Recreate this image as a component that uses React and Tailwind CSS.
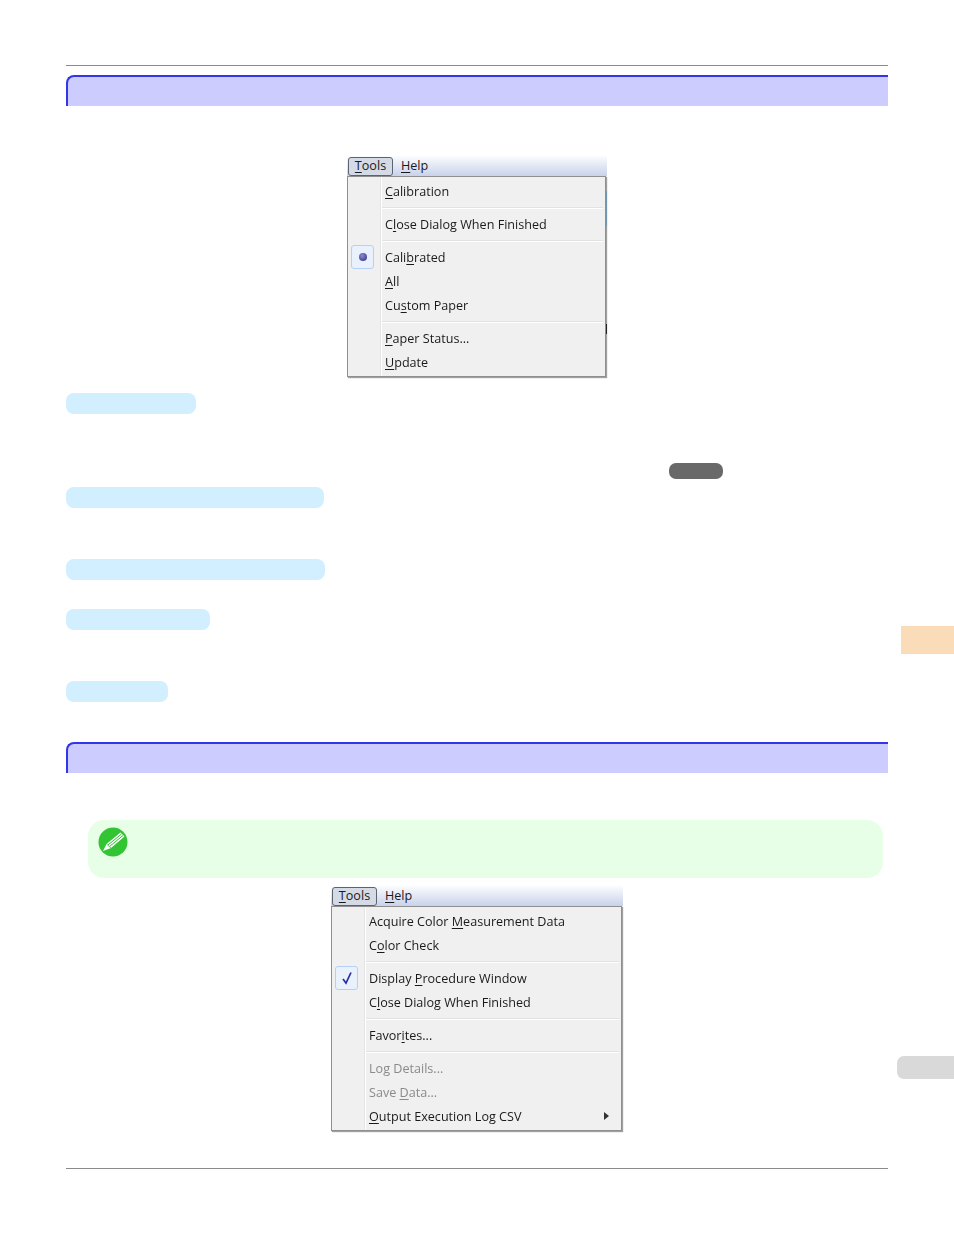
const Sep = () => (
  <div className="h-[9px] flex items-center pl-[33px] pr-[2px]">
    <div className="h-[2px] w-full bg-[#e2e2e2] border-b border-white"></div>
  </div>
);

const Item = ({ children, gray, mark, arrow }) => (
  <div className={"h-[24px] flex items-center pl-[37px] pt-[2px] relative " + (gray ? "text-[#8a8a8a]" : "text-[#1a1a1a]")}>
    {mark && (
      <div className="absolute left-[3px] top-0 w-[23px] h-[24px] rounded-[3px] border border-[#b5d0f2] bg-[#e9f1fc] flex items-center justify-center">
        {mark === "dot" ? (
          <div className="w-[8px] h-[8px] rounded-full bg-[radial-gradient(circle_at_40%_35%,#8c8cd0,#2c2c80)]"></div>
        ) : (
          <svg width="12" height="14" viewBox="0 0 12 14">
            <path d="M2 8 L5 12 L10 1.5" fill="none" stroke="#2a2fa0" strokeWidth="1.7" />
          </svg>
        )}
      </div>
    )}
    <span>{children}</span>
    {arrow && <div className="absolute right-[12px] top-[8px] w-0 h-0 border-y-[4px] border-y-transparent border-l-[5px] border-l-[#333]"></div>}
  </div>
);

const K = ({ children }) => <u className="underline underline-offset-2 decoration-1">{children}</u>;

const MenuBar = () => (
  <div className="h-[20px] flex items-center bg-gradient-to-b from-[#fbfcfe] to-[#c9d2ea] text-[#1a1a1a]">
    <div className="ml-[1px] w-[45px] h-[19px] rounded-[3px] border border-[#5c6470] bg-[#d5dbe6] flex items-center justify-center"><span><K>T</K>ools</span></div>
    <div className="ml-[8px]"><K>H</K>elp</div>
  </div>
);

const Panel = ({ children }) => (
  <div className="mr-[1px] border border-[#8f8f8f] bg-[#f0f0f0] py-[2px] relative shadow-[1px_1px_1px_#a0a0a0]">
    <div className="absolute left-[32px] top-0 bottom-0 w-[2px] bg-[#e6e6e6] border-r border-white"></div>
    {children}
  </div>
);

const Section = () => (
  <div className="h-[31px] rounded-tl-[8px] border-t-2 border-l-2 border-[#3434e8] bg-[#ccccff]"></div>
);

const Pill = ({ className }) => <div className={"h-[21px] rounded-[8px] bg-[#d1efff] " + className}></div>;

const PencilBadge = () => (
  <svg width="30" height="30" viewBox="0 0 30 30" className="ml-[10px] mt-[7px]">
    <circle cx="15" cy="15" r="14.5" fill="#33c433" />
    <path d="M5 24 L8.5 17 L22.5 5.5 L26.5 9.5 L13 21 Z" fill="#fff" />
    <path d="M10 18 L23.5 7 M11.5 19.5 L25 8.5" stroke="#33c433" strokeWidth="1" fill="none" />
    <path d="M8.5 17 L13 21" stroke="#33c433" strokeWidth="0.8" fill="none" />
  </svg>
);

export default function App() {
  return (
    <div className="relative w-[954px] h-[1235px] bg-white overflow-hidden pt-[65px] px-[66px] font-['Open_Sans','Noto_Sans',sans-serif] text-[12.6px] leading-none">
      <div className="h-px w-[822px] bg-[#8a8a8a]"></div>
      <div className="w-[822px] mt-[9px]"><Section /></div>

      <div className="relative w-[260px] ml-[281px] mt-[50px] h-[222px] blur-[0.3px]">
        <MenuBar />
        <Panel>
          <Item><K>C</K>alibration</Item>
          <Sep />
          <Item>C<K>l</K>ose Dialog When Finished</Item>
          <Sep />
          <Item mark="dot">Cali<K>b</K>rated</Item>
          <Item><K>A</K>ll</Item>
          <Item>Cu<K>s</K>tom Paper</Item>
          <Sep />
          <Item><K>P</K>aper Status...</Item>
          <Item><K>U</K>pdate</Item>
        </Panel>
        <div className="absolute left-[259px] top-[35px] w-px h-[35px] bg-[#6f97ad]"></div>
        <div className="absolute left-[259px] top-[168px] w-px h-[10px] bg-[#222]"></div>
      </div>

      <Pill className="w-[130px] mt-[15px]" />
      <div className="ml-[603px] mt-[49px] w-[54px] h-[16px] rounded-[7px] bg-[#696969]"></div>
      <Pill className="w-[258px] mt-[8px]" />
      <Pill className="w-[259px] mt-[51px]" />
      <Pill className="w-[144px] mt-[29px]" />
      <Pill className="w-[102px] mt-[51px]" />

      <div className="w-[822px] mt-[40px]"><Section /></div>

      <div className="ml-[22px] mt-[47px] w-[795px] h-[58px] rounded-[16px] bg-[#e6ffe6] overflow-hidden">
        <PencilBadge />
      </div>

      <div className="w-[292px] ml-[265px] mt-[8px] h-[247px] blur-[0.3px]">
        <MenuBar />
        <Panel>
          <Item>Acquire Color <K>M</K>easurement Data</Item>
          <Item>C<K>o</K>lor Check</Item>
          <Sep />
          <Item mark="check">Display <K>P</K>rocedure Window</Item>
          <Item>C<K>l</K>ose Dialog When Finished</Item>
          <Sep />
          <Item>Favor<K>i</K>tes...</Item>
          <Sep />
          <Item gray>Lo<K>g</K> Details...</Item>
          <Item gray>Save <K>D</K>ata...</Item>
          <Item arrow><K>O</K>utput Execution Log CSV</Item>
        </Panel>
      </div>

      <div className="h-px w-[822px] bg-[#8a8a8a] mt-[35px]"></div>

      <div className="absolute right-0 top-[626px] w-[53px] h-[28px] bg-[#fadcb9]"></div>
      <div className="absolute right-0 top-[1056px] w-[57px] h-[23px] rounded-l-[7px] bg-[#d9d9d9]"></div>
    </div>
  );
}
